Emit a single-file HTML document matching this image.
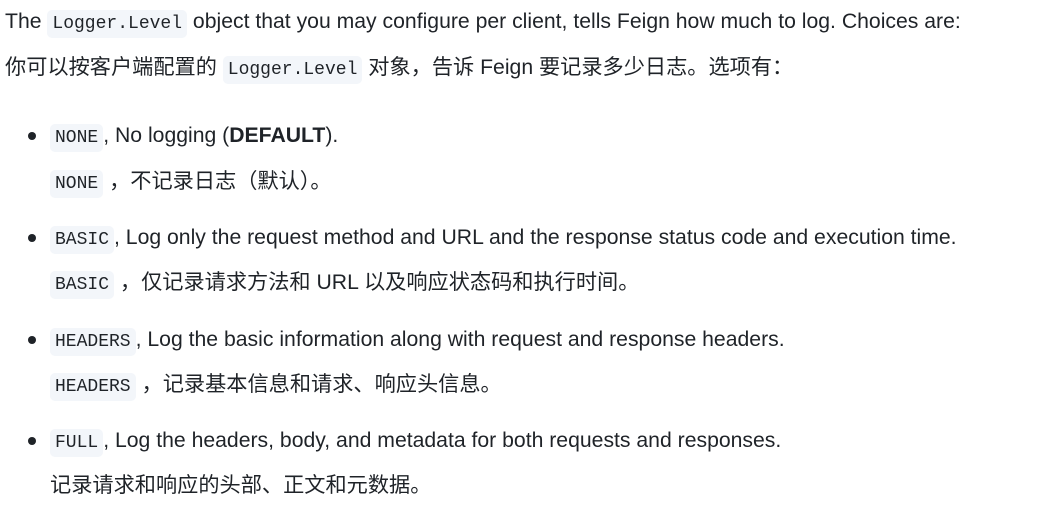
<!DOCTYPE html>
<html><head><meta charset="utf-8"><style>
body{margin:0;width:1053px;height:510px;background:#fff;color:#1f2328;font-family:"Liberation Sans","Noto Sans CJK SC",sans-serif;font-size:21.2px;position:relative;overflow:hidden}
.l{position:absolute;white-space:nowrap;line-height:30px;height:30px}
code{font-family:"Liberation Mono","Noto Sans CJK SC",monospace;font-size:18px;background:#f3f6fa;border-radius:5px;padding:4px 5px;color:#1f2328}
.dot{position:absolute;width:8px;height:8px;border-radius:50%;background:#1f2328}
b{font-weight:bold}
</style></head><body>
<div class="l" style="left:5px;top:7px">The <code>Logger.Level</code> object that you may configure per client, tells Feign how much to log. Choices are:</div>
<div class="l" style="left:5px;top:53px">你可以按客户端配置的 <code>Logger.Level</code> 对象，告诉 Feign 要记录多少日志。选项有：</div>

<div class="dot" style="left:28px;top:132px"></div>
<div class="l" style="left:50px;top:121px"><code>NONE</code>, No logging (<b>DEFAULT</b>).</div>
<div class="l" style="left:50px;top:167px"><code>NONE</code> ，不记录日志（默认）。</div>

<div class="dot" style="left:28px;top:234px"></div>
<div class="l" style="left:50px;top:223px"><code>BASIC</code>, Log only the request method and URL and the response status code and execution time.</div>
<div class="l" style="left:50px;top:268px"><code>BASIC</code> ，仅记录请求方法和 URL 以及响应状态码和执行时间。</div>

<div class="dot" style="left:28px;top:336px"></div>
<div class="l" style="left:50px;top:325px"><code>HEADERS</code>, Log the basic information along with request and response headers.</div>
<div class="l" style="left:50px;top:370px"><code>HEADERS</code> ，记录基本信息和请求、响应头信息。</div>

<div class="dot" style="left:28px;top:437px"></div>
<div class="l" style="left:50px;top:426px"><code>FULL</code>, Log the headers, body, and metadata for both requests and responses.</div>
<div class="l" style="left:50px;top:471px">记录请求和响应的头部、正文和元数据。</div>
</body></html>
